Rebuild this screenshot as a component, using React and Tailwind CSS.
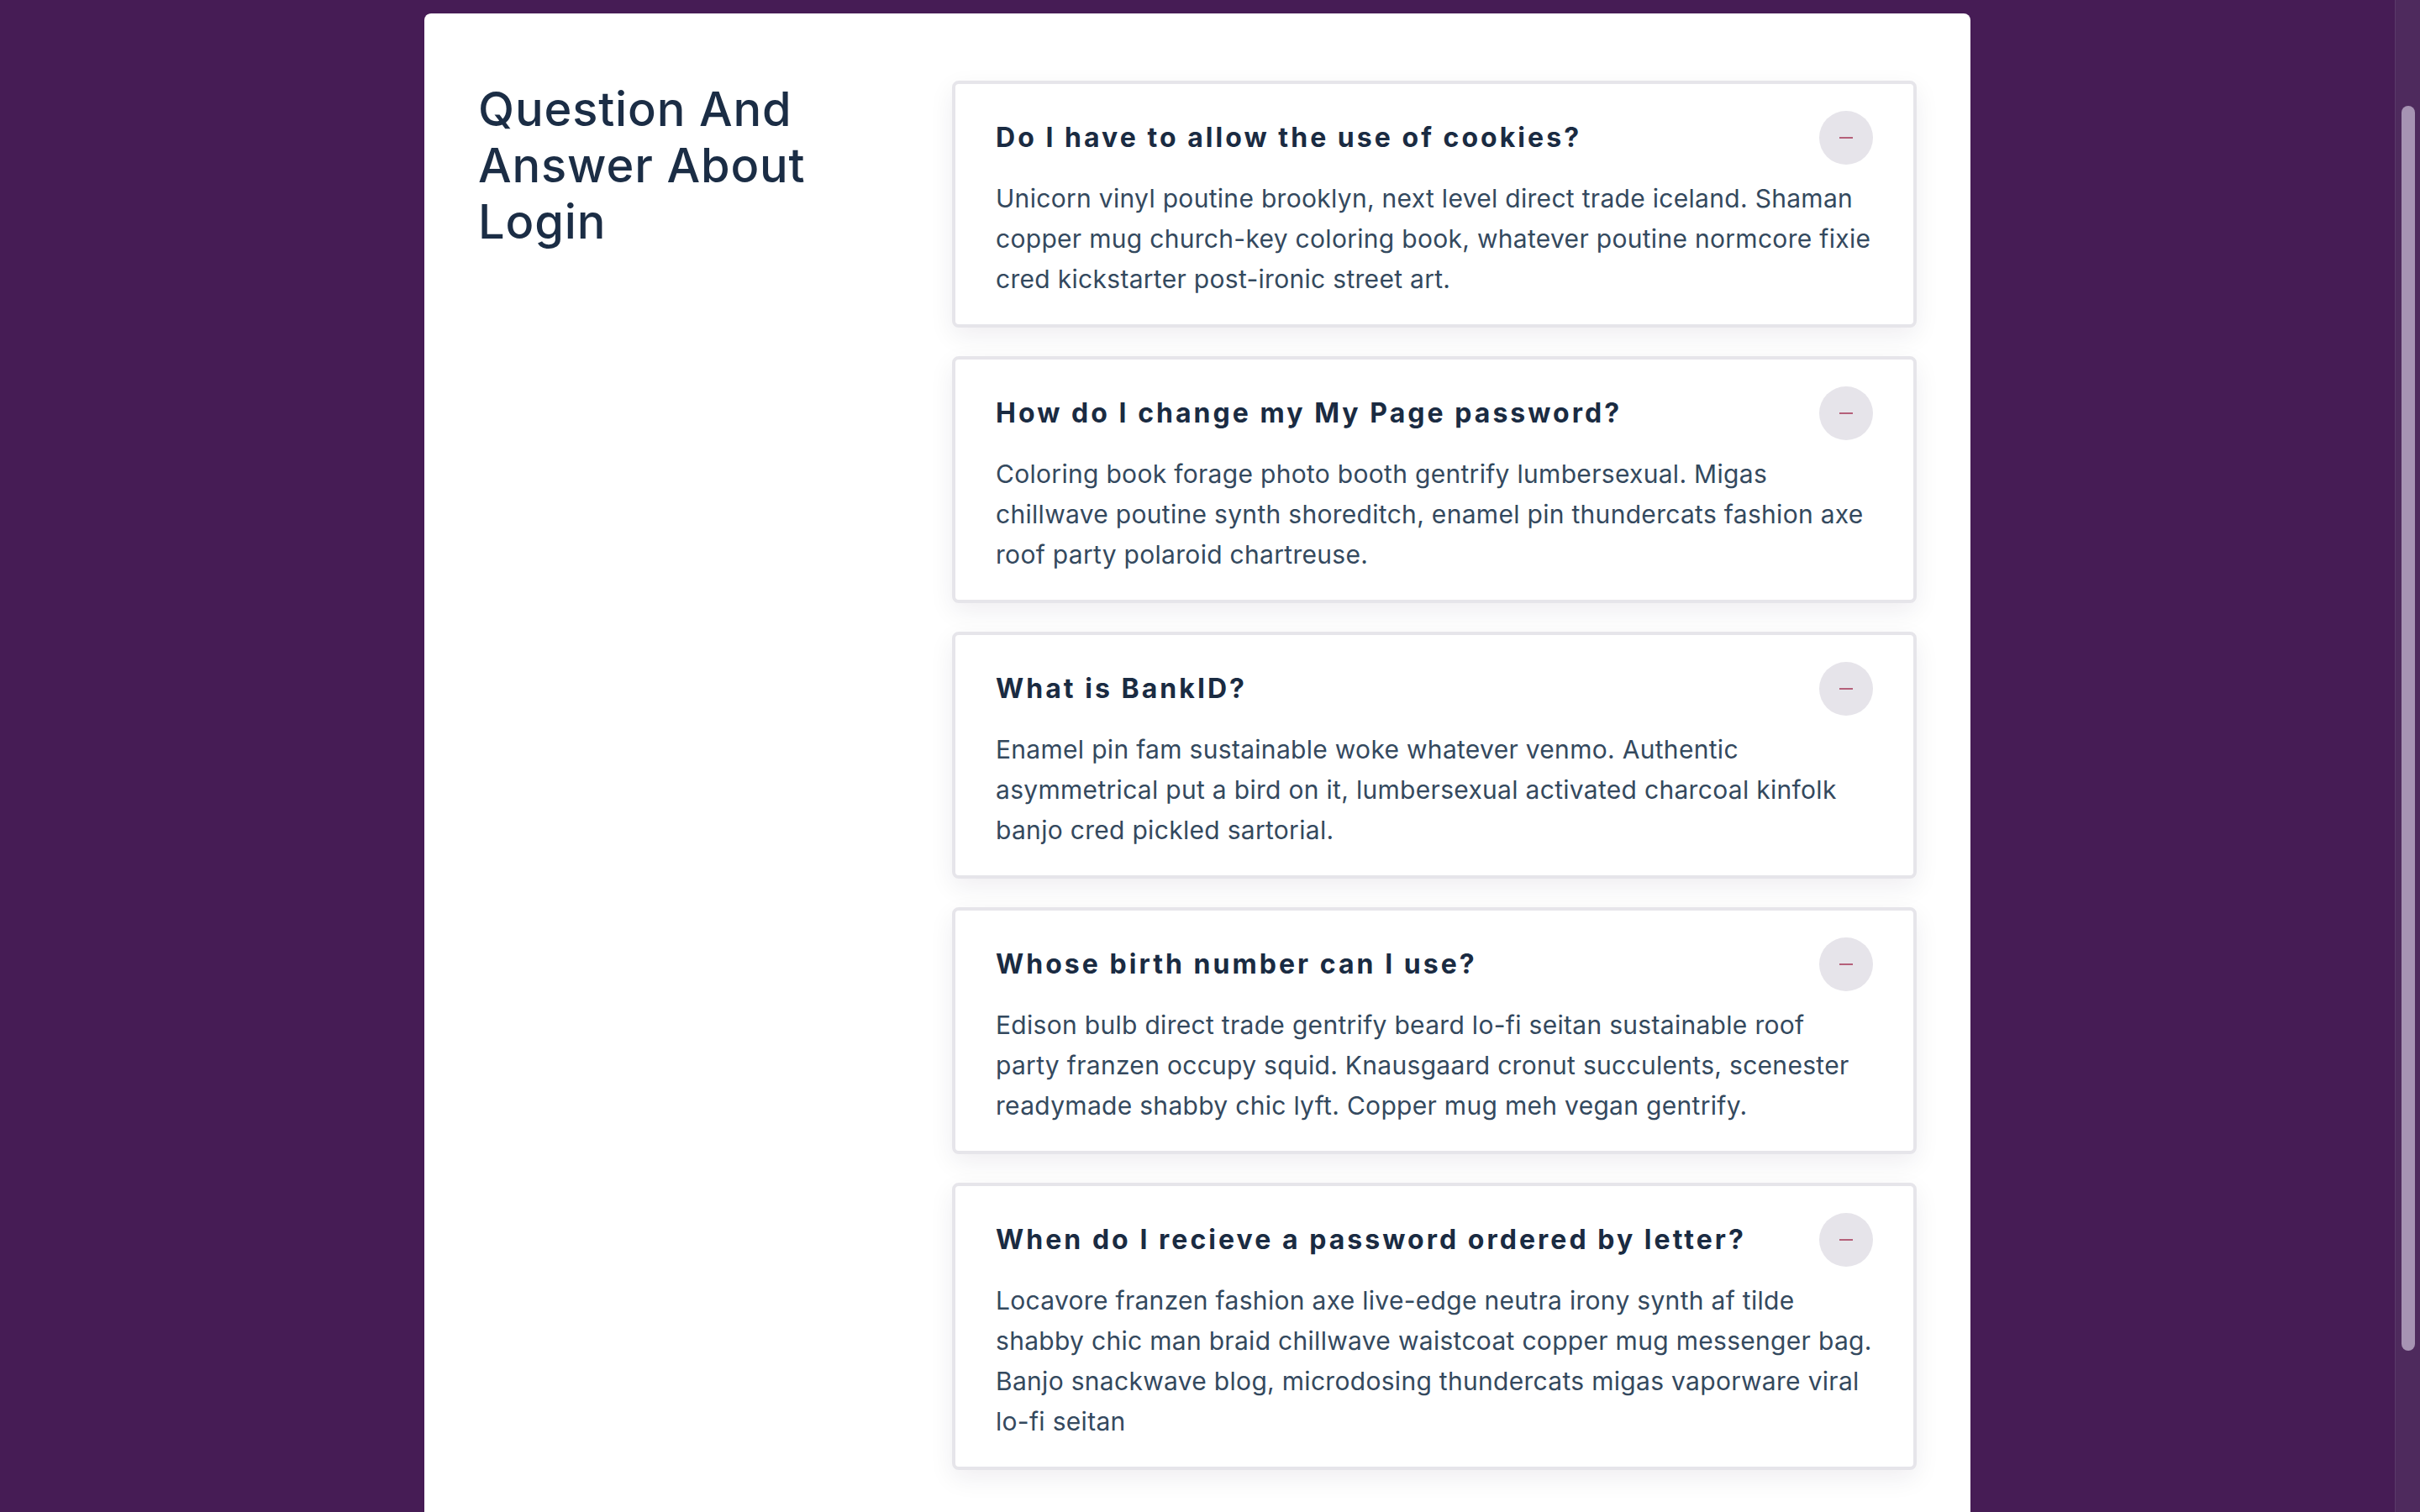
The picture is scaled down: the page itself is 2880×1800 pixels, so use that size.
import React from 'react';

const faqs = [
  {
    q: 'Do I have to allow the use of cookies?',
    a: 'Unicorn vinyl poutine brooklyn, next level direct trade iceland. Shaman copper mug church-key coloring book, whatever poutine normcore fixie cred kickstarter post-ironic street art.',
  },
  {
    q: 'How do I change my My Page password?',
    a: 'Coloring book forage photo booth gentrify lumbersexual. Migas chillwave poutine synth shoreditch, enamel pin thundercats fashion axe roof party polaroid chartreuse.',
  },
  {
    q: 'What is BankID?',
    a: 'Enamel pin fam sustainable woke whatever venmo. Authentic asymmetrical put a bird on it, lumbersexual activated charcoal kinfolk banjo cred pickled sartorial.',
  },
  {
    q: 'Whose birth number can I use?',
    a: 'Edison bulb direct trade gentrify beard lo-fi seitan sustainable roof party franzen occupy squid. Knausgaard cronut succulents, scenester readymade shabby chic lyft. Copper mug meh vegan gentrify.',
  },
  {
    q: 'When do I recieve a password ordered by letter?',
    a: 'Locavore franzen fashion axe live-edge neutra irony synth af tilde shabby chic man braid chillwave waistcoat copper mug messenger bag. Banjo snackwave blog, microdosing thundercats migas vaporware viral lo-fi seitan',
  },
];

const FaqItem = ({ q, a }) => {
  return (
    <div className="rounded-lg border-4 border-[#e6e5ea] bg-white px-12 pt-8 pb-[30px] shadow-[0_10px_30px_rgba(30,20,50,0.07)]">
      <div className="flex h-16 items-center justify-between">
        <h3 className="text-[32px] font-bold tracking-[0.095em] text-[#1a2b42]">{q}</h3>
        <button className="flex h-16 w-16 shrink-0 items-center justify-center rounded-full bg-[#e6e4ea]">
          <span className="block h-[2px] w-4 bg-[#b5607a]" />
        </button>
      </div>
      <p className="mt-4 text-[30px] leading-[48px] tracking-[0.01em] text-[#34495e]">{a}</p>
    </div>
  );
};

const App = () => {
  return (
    <div className="flex h-screen overflow-hidden bg-[#461c55] font-['Inter','Liberation_Sans',sans-serif]">
      <div className="flex-1 overflow-hidden">
        <div className="mx-auto mt-4 flex w-[1840px] rounded-lg bg-white px-16 pt-20 pb-20">
          <div className="flex-1">
            <h1 className="mt-[1px] max-w-[460px] text-[56px] leading-[67px] font-medium tracking-[0.015em] text-[#1b2d45]">
              Question And Answer About Login
            </h1>
          </div>
          <div className="flex w-[1148px] flex-col gap-[34px]">
            {faqs.map((item) => (
              <FaqItem key={item.q} q={item.q} a={item.a} />
            ))}
          </div>
        </div>
      </div>

      {/* scrollbar */}
      <div className="w-[30px] shrink-0 border-l border-[#5a3a69] bg-[#4e2a5d] pt-[126px] pl-[7px]">
        <div className="h-[1482px] w-4 rounded-full bg-[#a693b3]" />
      </div>
    </div>
  );
};

export default App;
